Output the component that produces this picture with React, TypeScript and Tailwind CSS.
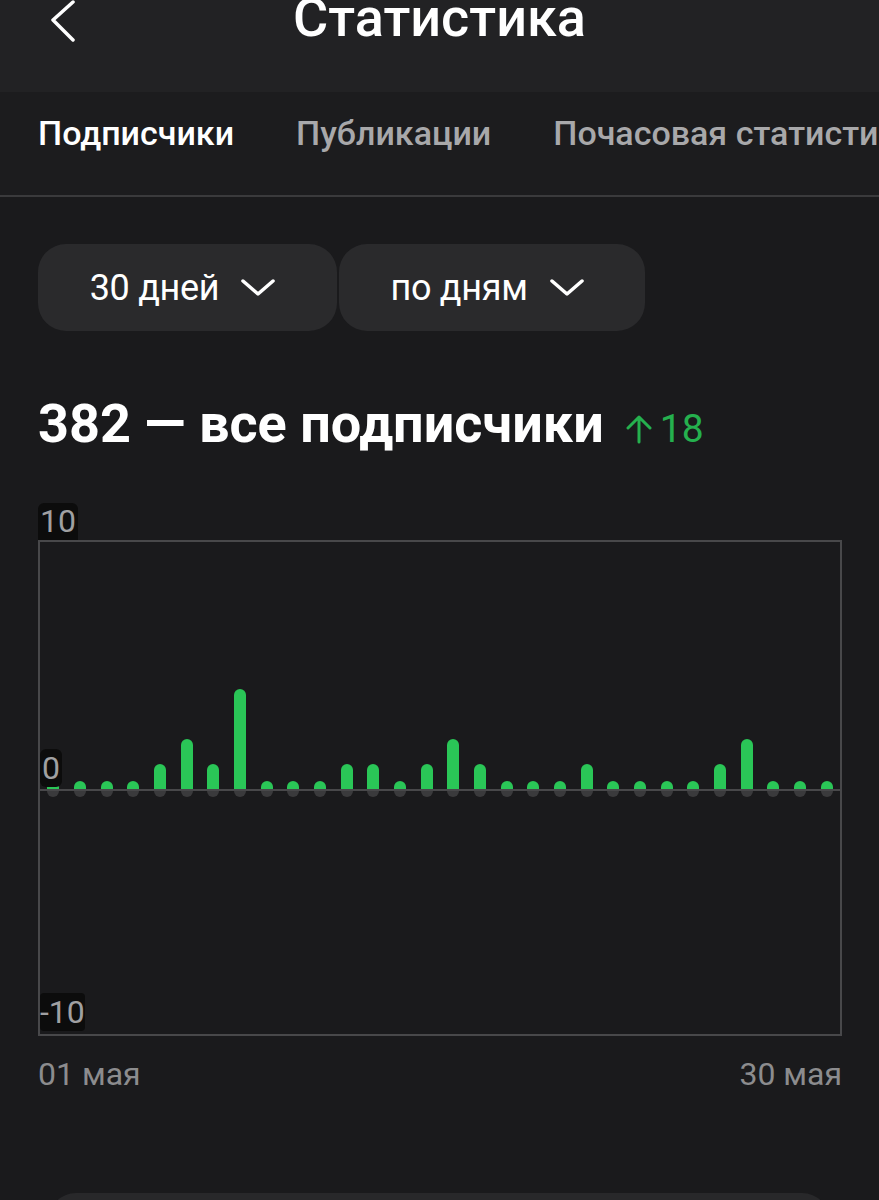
const values = [0, 0, 0, 0, 1, 2, 1, 4, 0, 0, 0, 1, 1, 0, 1, 2, 1, 0, 0, 0, 1, 0, 0, 0, 0, 1, 2, 0, 0, 0];

function Chevron() {
  return (
    <svg width="34" height="18" viewBox="0 0 34 18" fill="none">
      <path d="M2 2 L17 15 L32 2" stroke="white" strokeWidth="3.5" strokeLinecap="round" strokeLinejoin="round" />
    </svg>
  );
}

function Dropdown({ label, width }: { label: string; width: string }) {
  return (
    <button className={`${width} h-[87px] rounded-[28px] bg-[#2a2a2c] flex items-center justify-center gap-[22px] text-white text-[36px] tracking-[-0.3px] pr-[10px]`}>
      <span>{label}</span>
      <Chevron />
    </button>
  );
}

export default function App() {
  return (
    <div className="min-h-screen bg-[#1a1a1c] font-['Roboto',sans-serif] overflow-hidden">
      {/* Header */}
      <header className="h-[92px] bg-[#222224] relative flex justify-center overflow-hidden">
        <svg className="absolute left-[50px] top-0" width="28" height="44" viewBox="0 0 28 44" fill="none">
          <path d="M23 2 L3 20 L23 40" stroke="white" strokeWidth="3.5" strokeLinecap="round" strokeLinejoin="round" />
        </svg>
        <h1 className="text-white text-[54px] font-medium leading-none -mt-[9px]">Статистика</h1>
      </header>

      {/* Tabs */}
      <nav className="h-[105px] bg-[#1c1c1e] border-b-2 border-[#3a3a3c] flex items-center gap-[62px] pl-[38px] whitespace-nowrap text-[34px] font-medium pb-[20px]">
        <span className="text-white">Подписчики</span>
        <span className="text-[#a8a8aa]">Публикации</span>
        <span className="text-[#a8a8aa]">Почасовая статистика</span>
      </nav>

      <main className="px-[38px]">
        <div className="flex gap-[2px] mt-[47px]">
          <Dropdown label="30 дней" width="w-[299px]" />
          <Dropdown label="по дням" width="w-[306px]" />
        </div>

        <div className="mt-[66px] flex items-baseline gap-[22px]">
          <h2 className="text-white text-[54px] font-bold leading-none">382 — все подписчики</h2>
          <span className="flex items-baseline text-[#25b04e] text-[39px] gap-[8px]">
            <svg width="26" height="30" viewBox="0 0 26 30" fill="none" className="self-center">
              <path d="M13 28 V3 M2 14 L13 3 L24 14" stroke="#25b04e" strokeWidth="3" strokeLinecap="round" strokeLinejoin="round" />
            </svg>
            18
          </span>
        </div>

        {/* Chart */}
        <div className="mt-[44px] w-[804px]">
          <div className="inline-block bg-[#0c0c0c] rounded-t-[6px] text-[#a0a0a2] text-[32px] leading-[37px] px-[2px]">10</div>
          <div className="relative h-[496px] border-2 border-[#48484a] flex flex-col">
            <div className="h-[247px] flex items-end">
              {values.map((v, i) => (
                <div key={i} className="flex-1 flex justify-center">
                  <div className="w-[12px] bg-[#2ac657] rounded-t-full" style={{ height: Math.max(8, v * 25) }} />
                </div>
              ))}
            </div>
            <div className="h-[2px] bg-[#48484a]" />
            <div className="flex">
              {values.map((_, i) => (
                <div key={i} className="flex-1 flex justify-center">
                  <div className="w-[12px] h-[6px] bg-[#3a3a3c] rounded-b-full" />
                </div>
              ))}
            </div>
            <div className="absolute left-0 top-[207px] bg-[#0c0c0c] rounded-[6px] text-[#a0a0a2] text-[32px] leading-[38px] px-[2px]">0</div>
            <div className="absolute left-0 bottom-[3px] bg-[#0c0c0c] rounded-[4px] text-[#a0a0a2] text-[32px] leading-[38px]">-10</div>
          </div>
          <div className="flex justify-between text-[#8c8c8e] text-[32px] mt-[14px]">
            <span>01 мая</span>
            <span>30 мая</span>
          </div>
        </div>

        <div className="mt-[95px] ml-[10px] w-[782px] h-[40px] rounded-t-[28px] bg-[#28282a]" />
      </main>
    </div>
  );
}
